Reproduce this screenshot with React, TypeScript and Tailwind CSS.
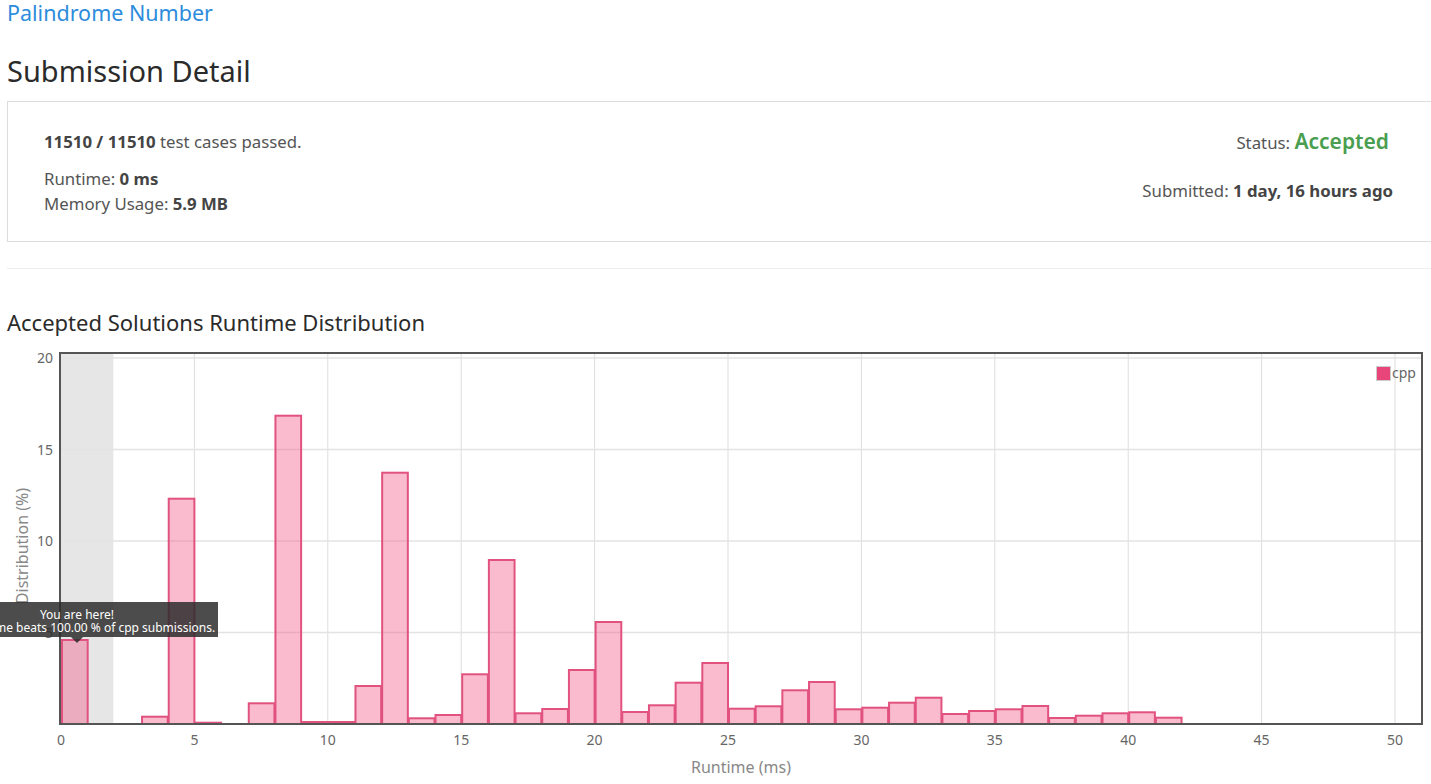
import React from "react";

// bar heights in px above the baseline, one per 1 ms bucket
const BARS: number[] = [
  84, 0, 0, 7.3, 225.3, 1.3, 0, 20.7, 308.3, 2, 2, 38, 251.3, 5.7, 9, 49.7, 164, 10.7, 15, 54, 102,
  12, 18.7, 41.3, 61, 15.3, 17.7, 33.7, 42, 14.7, 16.3, 21.3, 26.3, 10, 13, 14.7, 18, 6, 8.3, 10.7,
  11.7, 6.3,
];

const X0 = 61;
const PX = 26.68;
const BASE = 384;
const PY = 18.3;

function RuntimeChart() {
  const font = "'Noto Sans', 'Open Sans', sans-serif";
  return (
    <svg width={1431} height={444} className="block" style={{ fontFamily: font }}>
      {/* grey band: your runtime */}
      <rect x={X0} y={14} width={2 * PX - 1} height={BASE - 14} fill="#e6e6e6" />

      {/* grid */}
      {[1, 2, 3, 4, 5, 6, 7, 8, 9, 10].map((k) => (
        <line key={k} x1={X0 + k * 5 * PX} x2={X0 + k * 5 * PX} y1={14} y2={BASE} stroke="#dddddd" strokeWidth={1} />
      ))}
      {[1, 2, 3, 4].map((k) => (
        <line key={k} x1={X0} x2={1422} y1={BASE - k * 5 * PY} y2={BASE - k * 5 * PY} stroke="#e3e3e3" strokeWidth={1.5} />
      ))}

      {/* bars */}
      {BARS.map((h, i) =>
        h > 0 ? (
          <rect
            key={i}
            x={X0 + i * PX + 1}
            y={BASE - h}
            width={PX - 1}
            height={h}
            fill="rgba(244,92,140,0.42)"
            stroke="#e2527f"
            strokeWidth={2}
          />
        ) : null
      )}

      {/* frame */}
      <rect x={60} y={13} width={1362} height={371} fill="none" stroke="#555555" strokeWidth={2} />

      {/* y labels */}
      {[5, 10, 15, 20].map((v) => (
        <text key={v} x={53} y={BASE - v * PY + 5} textAnchor="end" fontSize={14} fill="#666">
          {v}
        </text>
      ))}
      <text x={0} y={0} transform="translate(28 206) rotate(-90)" textAnchor="middle" fontSize={16} fill="#888">
        Distribution (%)
      </text>

      {/* x labels */}
      {[0, 5, 10, 15, 20, 25, 30, 35, 40, 45, 50].map((v) => (
        <text key={v} x={X0 + v * PX} y={405} textAnchor="middle" fontSize={14} fill="#666">
          {v}
        </text>
      ))}
      <text x={741} y={433} textAnchor="middle" fontSize={16} fill="#888">
        Runtime (ms)
      </text>

      {/* legend */}
      <rect x={1376.5} y={26.5} width={14} height={14} fill="#e8457a" stroke="#cccccc" strokeWidth={1} />
      <text x={1392} y={38} fontSize={14} fill="#666">
        cpp
      </text>

      {/* tooltip */}
      <g>
        <rect x={-70} y={262} width={288} height={35} fill="rgba(45,45,45,0.85)" />
        <polygon points="71,297 83,297 77,303" fill="rgba(45,45,45,0.85)" />
        <text x={77} y={279} textAnchor="middle" fontSize={12} fill="#ffffff">
          You are here!
        </text>
        <text x={77} y={292} textAnchor="middle" fontSize={12} fill="#ffffff">
          Your runtime beats 100.00 % of cpp submissions.
        </text>
      </g>
    </svg>
  );
}

export default function App() {
  return (
    <div className="w-[1431px] h-[784px] overflow-hidden bg-white text-[#555]" style={{ fontFamily: "'Noto Sans', 'Open Sans', sans-serif" }}>
      <div className="ml-[7px] w-[1440px]">
        <a className="block text-[21.5px] leading-[25px] text-[#2d8cdc]">Palindrome Number</a>
        <h1 className="mt-[29px] text-[29px] leading-[34px] text-[#2b2b2b]">Submission Detail</h1>

        <div className="mt-[13px] h-[141px] border border-[#dddddd] flex justify-between pl-[36px] pr-[53px]">
          <div className="pt-[29px] text-[16.8px]">
            <div className="leading-[22px]">
              <b className="text-[#444]">11510 / 11510</b> test cases passed.
            </div>
            <div className="mt-[13px] leading-[25px]">
              Runtime: <b className="text-[#444]">0 ms</b>
            </div>
            <div className="leading-[25px]">
              Memory Usage: <b className="text-[#444]">5.9 MB</b>
            </div>
          </div>
          <div className="pt-[24px] text-[16.8px] text-right">
            <div className="leading-[30px] pr-[4px]">
              Status: <span className="text-[21px] font-semibold text-[#4a9e50]">Accepted</span>
            </div>
            <div className="mt-[22px] leading-[22px]">
              Submitted: <b className="text-[#444]">1 day, 16 hours ago</b>
            </div>
          </div>
        </div>

        <div className="mt-[26px] border-t border-[#eeeeee]" />
        <h3 className="mt-[39px] text-[22px] leading-[28px] text-[#2b2b2b]">Accepted Solutions Runtime Distribution</h3>
      </div>
      <div className="mt-[4px]">
        <RuntimeChart />
      </div>
    </div>
  );
}
